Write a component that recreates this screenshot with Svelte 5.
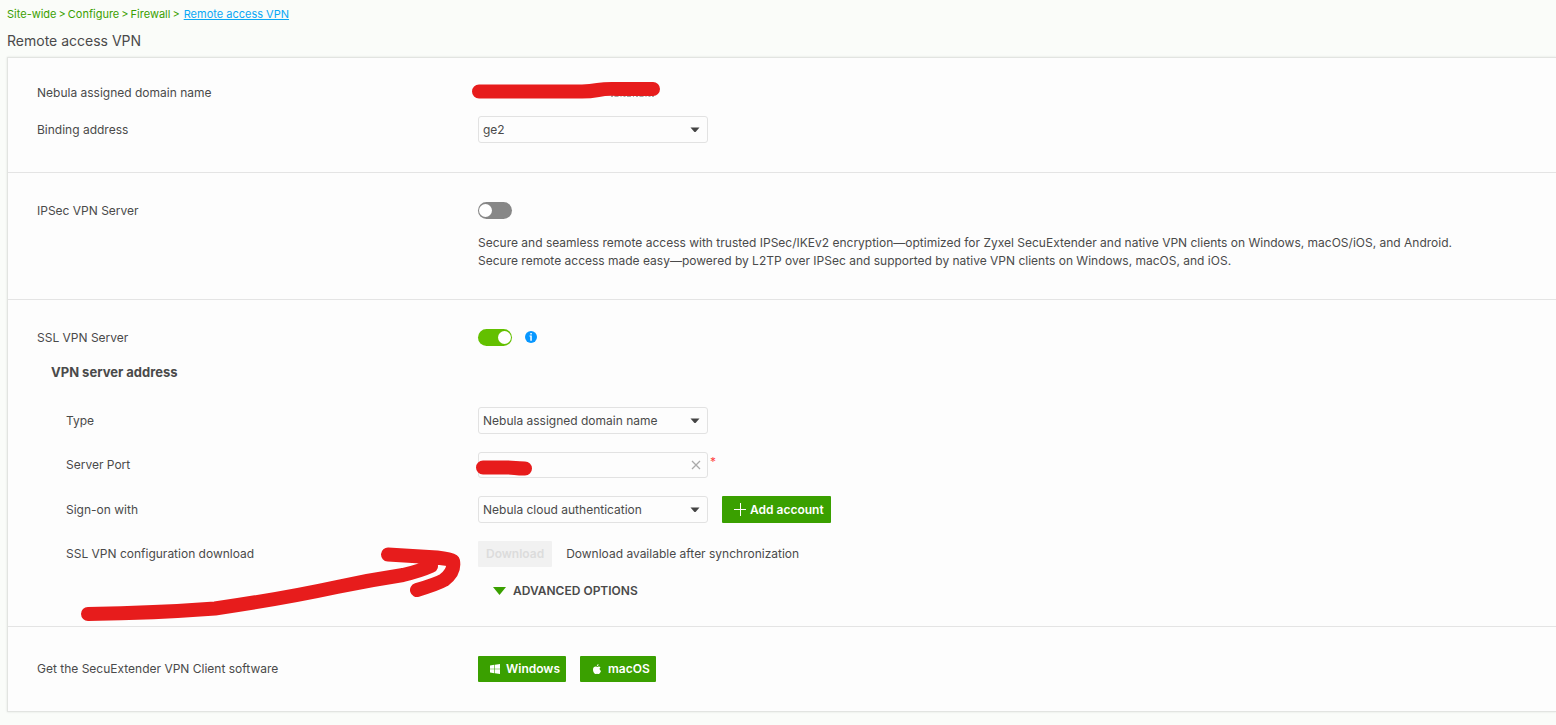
<script lang="ts">
  const trail = ['Site-wide', 'Configure', 'Firewall']
  const interfaces = ['ge2', 'ge1']
  const addressTypes = ['Nebula assigned domain name', 'Custom domain name']
  const authMethods = ['Nebula cloud authentication', 'Active Directory']

  let binding = $state('ge2')
  let ipsecEnabled = $state(false)
  let sslEnabled = $state(true)
  let addressType = $state(addressTypes[0])
  let serverPort = $state('')
  let authMethod = $state(authMethods[0])
</script>

{#snippet caret()}
  <svg class="caret" width="10" height="6" viewBox="0 0 10 6" aria-hidden="true"><path d="M0.5 0.5h9L6 4.5q-1 1-2 0z" fill="#444" /></svg>
{/snippet}

<div class="page">
  <nav class="breadcrumb" aria-label="Breadcrumb">
    {#each trail as item}
      <a href="#top">{item}</a><span>&gt;</span>
    {/each}
    <a class="current" href="#top" aria-current="page">Remote access VPN</a>
  </nav>
  <h1>Remote access VPN</h1>

  <main class="panel">
    <section class="general">
      <div class="row">
        <span class="label">Nebula assigned domain name</span>
        <div class="control">
          <svg class="mark mark-domain" width="190" height="20" viewBox="0 0 190 20" aria-hidden="true">
            <path d="M139 16h43" stroke="#555" stroke-width="1" stroke-dasharray="2 1.500 4 2 1 2" />
            <path d="M7 11.500H110Q118 11.500 126 10T145 9H181" stroke="#e71c1c" stroke-width="14" stroke-linecap="round" fill="none" />
          </svg>
        </div>
      </div>
      <div class="row">
        <label class="label" for="binding">Binding address</label>
        <div class="control">
          <div class="field">
            <select id="binding" bind:value={binding}>
              {#each interfaces as name}<option>{name}</option>{/each}
            </select>
            {@render caret()}
          </div>
        </div>
      </div>
    </section>

    <section class="ipsec">
      <div class="row">
        <label class="label" for="ipsec">IPSec VPN Server</label>
        <div class="control">
          <input class="toggle" id="ipsec" type="checkbox" role="switch" bind:checked={ipsecEnabled} />
        </div>
      </div>
      <div class="row">
        <div class="control description">
          <p>Secure and seamless remote access with trusted IPSec/IKEv2 encryption—optimized for Zyxel SecuExtender and native VPN clients on Windows, macOS/iOS, and Android.</p>
          <p>Secure remote access made easy—powered by L2TP over IPSec and supported by native VPN clients on Windows, macOS, and iOS.</p>
        </div>
      </div>
    </section>

    <section class="ssl">
      <div class="row">
        <label class="label" for="ssl">SSL VPN Server</label>
        <div class="control">
          <input class="toggle" id="ssl" type="checkbox" role="switch" bind:checked={sslEnabled} />
          <button type="button" class="info" aria-label="About SSL VPN Server">
            <svg width="12" height="12" viewBox="0 0 12 12">
              <circle cx="6" cy="6" r="6" fill="#0797ff" />
              <path d="M5.3 2h1.500v1.500H5.300zM4.500 4.600h2.300v5.200H5.300V5.600h-.8z" fill="#fff" />
            </svg>
          </button>
        </div>
      </div>
      <h2>VPN server address</h2>
      <div class="settings">
        <div class="row">
          <label class="label" for="type">Type</label>
          <div class="control">
            <div class="field">
              <select id="type" bind:value={addressType}>
                {#each addressTypes as name}<option>{name}</option>{/each}
              </select>
              {@render caret()}
            </div>
          </div>
        </div>
        <div class="row">
          <label class="label" for="port">Server Port</label>
          <div class="control">
            <div class="field">
              <input class="text" id="port" type="text" required bind:value={serverPort} />
              <button type="button" class="clear" aria-label="Clear" onclick={() => (serverPort = '')}>
                <svg width="10" height="10" viewBox="0 0 10 10"><path d="M1 1l8 8M9 1L1 9" stroke="#aaa" stroke-width="1.3" /></svg>
              </button>
              <span class="required">*</span>
            </div>
            <svg class="mark mark-port" width="58" height="18" viewBox="0 0 58 18" aria-hidden="true">
              <path d="M7 8.500H31Q35 8.500 39 9T49 9.500" stroke="#e71c1c" stroke-width="14" stroke-linecap="round" fill="none" />
            </svg>
          </div>
        </div>
        <div class="row">
          <label class="label" for="auth">Sign-on with</label>
          <div class="control">
            <div class="field">
              <select id="auth" bind:value={authMethod}>
                {#each authMethods as name}<option>{name}</option>{/each}
              </select>
              {@render caret()}
            </div>
            <button type="button" class="btn add">
              <svg width="12" height="13" viewBox="0 0 12 13"><path d="M6.500 0v13M0 6.500h12" stroke="#fff" stroke-width="1" /></svg>
              Add account
            </button>
          </div>
        </div>
        <div class="row">
          <span class="label">SSL VPN configuration download</span>
          <div class="control">
            <button type="button" class="btn download" disabled>Download</button>
            <span>Download available after synchronization</span>
            <svg class="mark mark-arrow" width="400" height="90" viewBox="70 540 400 90" aria-hidden="true">
              <path d="M88 614Q155 613 215 608.500C260 602 300 595 337 587Q370 580 403 575Q420 571 431 566M388 554.500L437 557.500Q450 559 453 561Q455 572 444 580Q437 584 417 590" stroke="#e71c1c" stroke-width="14" stroke-linecap="round" stroke-linejoin="round" fill="none" />
            </svg>
          </div>
        </div>
      </div>
      <div class="row">
        <div class="control">
          <button type="button" class="advanced">
            <svg width="13" height="8" viewBox="0 0 13 8"><path d="M0 0h13L6.500 8z" fill="#3aa000" /></svg>
            ADVANCED OPTIONS
          </button>
        </div>
      </div>
    </section>

    <section class="clients">
      <div class="row">
        <span class="label">Get the SecuExtender VPN Client software</span>
        <div class="control">
          <button type="button" class="btn os">
            <svg width="10" height="10" viewBox="0 0 10 10"><path d="M0 1.400l4.300-.6v3.900H0zM4.900.7L10 0v4.700H4.900zM0 5.300h4.300v3.900L0 8.600zM4.900 5.300H10V10l-5.100-.7z" fill="#fff" /></svg>
            Windows
          </button>
          <button type="button" class="btn os">
            <svg width="10" height="10" viewBox="0 0 10 10"><path d="M6.600 0Q6.700 1.800 4.800 2.300 4.700.6 6.600 0zM5 2.900C6 2.500 7.600 2 8.600 3.300 7.200 4.100 7.300 6.200 9 6.900 8.500 8.400 7.500 10 6.600 10 6 10 5.700 9.700 5 9.700S4 10 3.400 10C2.200 10 1 7.700 1 5.800 1 3 3 2.100 5 2.900z" fill="#fff" /></svg>
            macOS
          </button>
        </div>
      </div>
    </section>
  </main>
</div>

<style>
  :global(body) { background: #fafcf9; }
  .page, .page button, .page input, .page select { font-family: Inter, "Open Sans", sans-serif; font-size: 12px; line-height: 18px; color: #4a4a4a; }
  .page { padding: 5px 0 13px 7px; overflow: hidden; }
  .breadcrumb { display: flex; gap: 2px; }
  .breadcrumb a, .breadcrumb span { font-size: 11px; color: #3aa000; text-decoration: none; }
  .breadcrumb a.current { margin-left: 2px; color: #0aa7f5; text-decoration: underline; }
  h1 { margin: 8px 0 7px; font-size: 14px; line-height: 19px; font-weight: 400; }
  h2 { margin: 9px 0 23px 14px; font-size: 13px; line-height: 24px; font-weight: 700; }
  p { margin: 0; }

  .panel { background: #fdfdfd; border: 1px solid #e2e4e1; border-right: 0; box-shadow: 0 0 2px #dfe2dd; }
  section { padding: 24px 29px 29px; }
  section + section { border-top: 1px solid #e4e4e4; }
  .general { padding-top: 21px; }
  .ssl { padding-bottom: 22px; }
  .clients { padding-top: 29px; }

  .row { display: grid; grid-template-columns: 441px 1fr; align-items: center; }
  .control { grid-column: 2; display: flex; align-items: center; position: relative; min-height: 26px; }
  .general .row, .ipsec .row, .ssl > .row:first-child { min-height: 27px; }
  .row + .row { margin-top: 10px; }
  .settings { display: grid; gap: 18px; }
  .settings .row { margin: 0; }
  .settings .label { padding-left: 29px; }
  .settings + .row { margin-top: 11px; }
  .description { display: block; }

  .field { position: relative; width: 230px; }
  select, .text { display: block; box-sizing: border-box; width: 100%; height: 27px; padding: 0 24px 0 4px; background: #fdfdfd; border: 1px solid #e2e2e2; border-radius: 3px; appearance: none; outline: 0; }
  .text { height: 26px; }
  .caret { position: absolute; right: 8px; top: 11px; pointer-events: none; }
  .clear { position: absolute; right: 7px; top: 8px; display: flex; padding: 0; border: 0; background: none; cursor: pointer; }
  .page .required { position: absolute; left: 232px; top: 1px; color: #f44; }

  .toggle { appearance: none; width: 34px; height: 17px; margin: 0 0 1px; padding: 1px; border-radius: 9px; background: #878787; cursor: pointer; }
  .toggle::before { content: ''; display: block; width: 13px; height: 13px; margin: 1px 0 0; border-radius: 50%; background: #fff; }
  .toggle:checked { background: #63c000; }
  .toggle:checked::before { margin-left: 19px; }
  .info { display: flex; margin: 0 0 2px 13px; padding: 0; border: 0; background: none; }

  .btn { display: flex; align-items: center; justify-content: center; height: 26px; padding: 0 8px; border: 0; border-radius: 1px; cursor: pointer; white-space: nowrap; }
  .page .btn { color: #fff; background: #3aa000; font-weight: 600; }
  .page .download { margin-right: 14px; background: #f1f1f1; color: #dcdcdc; }
  .add { height: 27px; margin-left: 14px; padding: 0 7px 0 12px; gap: 4px; }
  .os { padding: 0 6px 0 12px; gap: 6px; }
  .os + .os { margin-left: 14px; }
  .page .advanced { display: flex; align-items: center; gap: 7px; margin-left: 15px; padding: 0; border: 0; background: none; font-weight: 600; cursor: pointer; }

  /* red marker strokes lie over the form */
  .mark { position: absolute; pointer-events: none; }
  .mark-domain { left: -6px; top: 0; }
  .mark-port { left: -2px; top: 7px; }
  .mark-arrow { left: -408px; top: -1px; }
</style>
